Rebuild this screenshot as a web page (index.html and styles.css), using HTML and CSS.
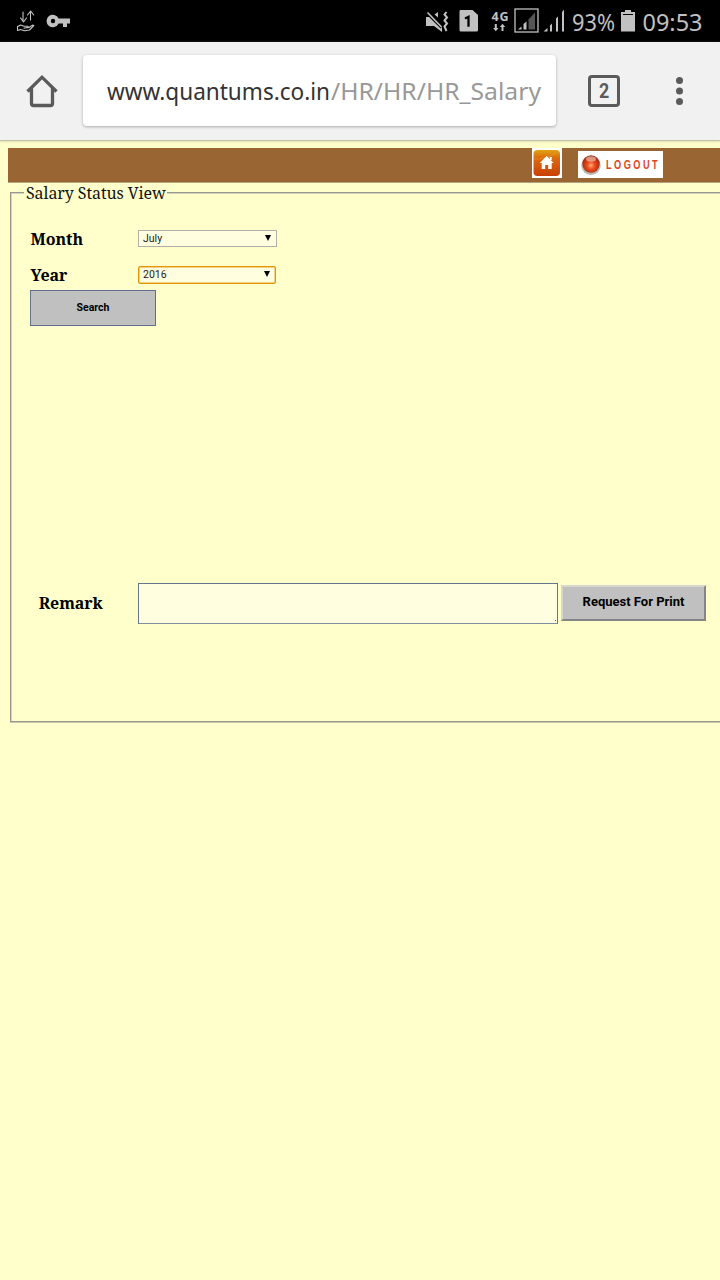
FILE: index.html
```html
<!DOCTYPE html>
<html lang="en">
<head>
<meta charset="utf-8">
<title>Salary Status View</title>
<link rel="stylesheet" href="styles.css">
</head>
<body>
<header class="status">
  <svg width="720" height="42" viewBox="0 0 720 42">
    <g fill="none" stroke="#c4c4c4" stroke-width="1.1" stroke-linejoin="round" stroke-linecap="round">
      <path d="M23 12v9M20.500 18l3 4 3-4M30.500 20v-8M27.500 15l3.200-4 3 4"/>
      <path d="M17.500 26.500v4l3-1 4 1.200 5-.7 4.300-4.500-1.300-.4-3.500 2.400-4.500.5M17.500 26.700l3-1.700 3.500 1.300h4l.3 1-4.300 1"/>
    </g>
    <path fill="#c1c1c1" fill-rule="evenodd" d="M58.600 18.500a6.300 6.300 0 1 0 0 5H63V27h4v-3.500h3v-5zM53 18.800a2.200 2.200 0 1 1 0 4.400 2.200 2.200 0 0 1 0-4.400z"/>
    <g fill="#c1c1c1">
      <path d="M426 17h5l11 10v5l-8-6h-8zM434.500 14.500l3.500-2.500v5.500z"/>
      <path d="M427.500 12.500l14.500 14.500" stroke="#000" stroke-width="4"/>
      <path d="M427.500 12.500l14 14.500" stroke="#c1c1c1" stroke-width="1.700"/>
      <path d="M446.500 12l-2 2.500 2.500 3-2.500 3 2.500 3-2.500 3 2 4.500" fill="none" stroke="#c1c1c1" stroke-width="2"/>
      <path d="M460.500 10h12l5.500 5v15q0 1.500-1.500 1.500h-15.500q-1.500 0-1.500-1.500V11.500q0-1.500 1-1.500z"/>
    </g>
    <path d="M465 18.500l3.500-1.700v10" fill="none" stroke="#000" stroke-width="2.300"/>
    <text class="net" x="491.500" y="20.500" textLength="17">4G</text>
    <path fill="#c1c1c1" d="M494.800 24h2v4h1.700l-2.700 3.200-2.700-3.200h1.700zM501.500 31h2v-4h1.700l-2.700-3.200-2.700 3.200h1.700z"/>
    <rect x="515" y="9" width="23" height="23" fill="none" stroke="#c1c1c1" stroke-width="1.300"/>
    <path fill="#c1c1c1" d="M518 29.500l3.500-3v3zM523.500 24l3-2.500v8h-3z"/>
    <path fill="#555" d="M528.500 19.500l6.500-7v17h-6.500z"/>
    <path fill="#c1c1c1" d="M543.500 31.500l4-3.500v3.500zM550 25.500l2-2v8h-2zM556 18.500l2-2v15h-2zM562 12l2-2.500v22h-2z"/>
    <text class="sys" x="572" y="31" textLength="43" lengthAdjust="spacingAndGlyphs">93%</text>
    <path fill="#c1c1c1" d="M625 10h6v2h4v19.500h-14V12h4z"/><path d="M623 14.500h10" stroke="#000"/>
    <text class="sys" x="642.500" y="31" textLength="60" lengthAdjust="spacingAndGlyphs">09:53</text>
  </svg>
</header>
<nav class="toolbar">
  <svg class="home" width="32" height="34" viewBox="0 0 32 34" fill="none" stroke="#5a5a5a" stroke-width="3.300">
    <path d="M1.500 17.500L16 3.200 30.500 17.500M5.500 14.500v15q0 2 2 2h17q2 0 2-2v-15"/>
  </svg>
  <div class="address">
    <svg width="472" height="70" viewBox="0 0 472 70">
      <text class="url" x="24" y="45" textLength="223" lengthAdjust="spacingAndGlyphs" fill="#333">www.quantums.co.in</text>
      <text class="url" x="248" y="45" textLength="210" lengthAdjust="spacingAndGlyphs" fill="#989898">/HR/HR/HR_Salary</text>
    </svg>
  </div>
  <div class="tabs"><span>2</span></div>
  <svg class="more" width="8" height="30" viewBox="0 0 8 30" fill="#5a5a5a"><circle cx="3.500" cy="4.500" r="3.500"/><circle cx="3.500" cy="15" r="3.500"/><circle cx="3.500" cy="25.500" r="3.500"/></svg>
</nav>
<main class="page">
  <div class="banner">
    <svg class="homebtn" width="30" height="30" viewBox="0 0 30 30">
      <defs><linearGradient id="o" x2="0" y2="1"><stop stop-color="#e0a414"/><stop offset=".3" stop-color="#dc6c10"/><stop offset="1" stop-color="#c84006"/></linearGradient></defs>
      <path fill="#fff" d="M0 0h30v30H0z"/><rect x="1.500" y="2" width="26.500" height="26" rx="4" fill="url(#o)"/>
      <path d="M2 11q10 1 25-7" stroke="#eb9a28" stroke-opacity=".6" fill="none"/>
      <path fill="#fff" d="M14.700 8l7 7h-2v6h-3.500v-4h-3v4H9.700v-6h-2zM17.700 9h2v3h-2z"/>
    </svg>
    <svg width="85" height="27" viewBox="0 0 85 27">
      <defs><radialGradient id="b" cy=".58"><stop stop-color="#ffad70"/><stop offset=".45" stop-color="#ed4b1e"/><stop offset="1" stop-color="#a92d12"/></radialGradient></defs>
      <path fill="#fff" d="M0 0h85v27H0z"/><circle cx="13" cy="14.500" r="9.700" fill="#b7bcb5"/><circle cx="13" cy="13" r="8.700" fill="url(#b)"/>
      <ellipse cx="13" cy="8" rx="5" ry="2.800" fill="#fff" opacity=".45"/>
      <text class="logout" transform="translate(28 18) scale(.74 1)">LOGOUT</text>
    </svg>
  </div>
  <section class="panel">
    <h1 class="legend">Salary Status View</h1>
    <div class="row"><span class="label month">Month</span><div class="select"><span>July</span><i class="arrow"></i></div></div>
    <div class="row second"><span class="label year">Year</span><div class="select focus"><span>2016</span><i class="arrow"></i></div></div>
    <button class="search">Search</button>
    <div class="remark">
      <span class="label">Remark</span><div class="area"><i class="grip"></i></div><button class="print">Request For Print</button>
    </div>
  </section>
</main>
</body>
</html>
```
FILE: styles.css
```css
* { box-sizing: border-box; }
body { margin: 0; width: 720px; height: 1280px; overflow: hidden; background: #ffffcc; display: flex; flex-direction: column; }
svg { display: block; flex: none; }
.status { height: 42px; background: #000; flex: none; }
.net { font: 700 12.500px "Noto Sans", sans-serif; fill: #c1c1c1; }
.sys { font: 24px "Noto Sans", sans-serif; fill: #c1c1c1; }
.toolbar { height: 99px; flex: none; background: #f1f1f1; border-bottom: 1px solid #c1c1a3; box-shadow: 0 1px 2px #ddddb4; display: flex; align-items: center; padding-left: 26px; }
.home { margin-right: 25px; }
.address { width: 473px; height: 71px; margin-top: -1px; background: #fff; border-radius: 4px; box-shadow: 0 1px 3px #aaa; flex: none; }
.url { font: 23.500px "Noto Sans", sans-serif; }
.tabs { width: 32px; height: 32px; flex: none; margin-left: 32px; border: 3px solid #5a5a5a; border-radius: 4px; font: 700 21px/27px Roboto, sans-serif; color: #5a5a5a; text-align: center; }
.tabs span { display: inline-block; transform: scaleX(.85); }
.more { margin-left: 56px; }
.page { padding: 7px 0 0 8px; }
.banner { height: 34px; background: #996633; box-shadow: 0 1px 0 #b9a07c; display: flex; align-items: flex-start; padding-left: 524px; }
.homebtn { margin-right: 16px; }
.banner svg:last-child { margin-top: 3px; }
.logout { font: 700 12.500px "Liberation Sans", sans-serif; letter-spacing: 3.300px; fill: #d9481c; }
.panel { margin: 10px 0 0 2px; width: 712px; height: 530px; border: solid #989890; border-width: 1px 0 1px 1px; box-shadow: inset 1px 1px 0 #d3d3ba, 0 1px 0 #c6c6b0; padding: 1px 0 0 19px; }
.legend { font: 400 16px/18px "Noto Serif", "DejaVu Serif Condensed", "DejaVu Serif", serif; letter-spacing: -.08px; width: 143px; height: 20px; margin: -10px 0 0 -6px; padding-left: 2px; background: #ffffcc; color: #111; white-space: nowrap; }
.row { display: flex; align-items: center; height: 22px; margin-top: 24px; }
.second { margin-top: 14px; }
.label { width: 108px; flex: none; padding-left: .6px; letter-spacing: -.1px; font: 700 16px/22px "Noto Serif", "DejaVu Serif Condensed", "DejaVu Serif", serif; color: #000; }
.select { width: 139px; height: 17px; margin-top: -2px; border: 1px solid #b0b0a8; background: #ffffe0; display: flex; align-items: center; justify-content: space-between; padding: 0 5px 0 4px; font: 10.500px Roboto, sans-serif; color: #222; }
.focus { width: 138px; height: 18px; margin-top: 0; padding-bottom: 2px; border: 1px solid #e59700; border-radius: 2px; box-shadow: inset 0 0 0 .5px #e5a030; }
.arrow { border: 3.500px solid transparent; border-top: 6px solid #000; border-bottom: 0; }
.search { display: block; width: 126px; height: 36px; margin: 4px 0 0; padding: 0 0 1px; border: 1px solid #607090; background: #c0c0c0; font: 700 10.500px Roboto, sans-serif; color: #000; }
.remark { display: flex; align-items: center; height: 41px; margin-top: 257px; padding-left: 8px; }
.remark .label { width: 100px; padding-left: .8px; margin-top: -1px; }
.area { width: 420px; height: 41px; flex: none; display: flex; align-items: flex-end; justify-content: flex-end; padding: 2px 1px; border: 1px solid #60758e; border-bottom-color: #8090a0; background: #ffffe0; }
.grip { width: 1px; height: 1px; background: #555; }
.print { width: 145px; height: 36px; flex: none; margin: -1px 0 0 3px; padding: 0 0 3px; border: 2px solid; border-color: #d7d7d0 #858585 #858585 #d7d7d0; background: #c0c0c0; font: 700 13px Roboto, sans-serif; color: #000; }
```
